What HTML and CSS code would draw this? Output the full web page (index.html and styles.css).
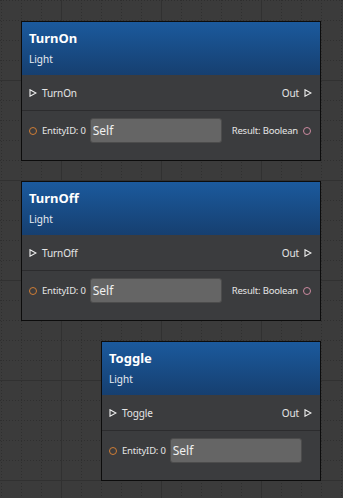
FILE: index.html
```html
<!DOCTYPE html>
<html lang="en">

<head>
    <meta charset="UTF-8">
    <meta name="viewport" content="width=device-width, initial-scale=1.0">
    <title>Script Canvas - Light</title>
    <link rel="stylesheet" href="styles.css">
</head>

<body>
    <div class="canvas">

        <!-- TurnOn -->
        <div class="node">
            <div class="node-header">
                <div class="node-title">TurnOn</div>
                <div class="node-category">Light</div>
            </div>
            <div class="exec-row">
                <span class="slot"><svg class="exec-pin" viewBox="0 0 8 8"><polygon points="1,0.8 7,4 1,7.2"/></svg>TurnOn</span>
                <span class="slot">Out<svg class="exec-pin" viewBox="0 0 8 8"><polygon points="1,0.8 7,4 1,7.2"/></svg></span>
            </div>
            <div class="data-row">
                <span class="slot"><i class="pin pin-entity"></i>EntityID: 0</span>
                <div class="value-box">Self</div>
                <span class="slot slot-out">Result: Boolean<i class="pin pin-bool"></i></span>
            </div>
        </div>

        <!-- TurnOff -->
        <div class="node">
            <div class="node-header">
                <div class="node-title">TurnOff</div>
                <div class="node-category">Light</div>
            </div>
            <div class="exec-row">
                <span class="slot"><svg class="exec-pin" viewBox="0 0 8 8"><polygon points="1,0.8 7,4 1,7.2"/></svg>TurnOff</span>
                <span class="slot">Out<svg class="exec-pin" viewBox="0 0 8 8"><polygon points="1,0.8 7,4 1,7.2"/></svg></span>
            </div>
            <div class="data-row">
                <span class="slot"><i class="pin pin-entity"></i>EntityID: 0</span>
                <div class="value-box">Self</div>
                <span class="slot slot-out">Result: Boolean<i class="pin pin-bool"></i></span>
            </div>
        </div>

        <!-- Toggle -->
        <div class="node node-small">
            <div class="node-header">
                <div class="node-title">Toggle</div>
                <div class="node-category">Light</div>
            </div>
            <div class="exec-row">
                <span class="slot"><svg class="exec-pin" viewBox="0 0 8 8"><polygon points="1,0.8 7,4 1,7.2"/></svg>Toggle</span>
                <span class="slot">Out<svg class="exec-pin" viewBox="0 0 8 8"><polygon points="1,0.8 7,4 1,7.2"/></svg></span>
            </div>
            <div class="data-row">
                <span class="slot"><i class="pin pin-entity"></i>EntityID: 0</span>
                <div class="value-box">Self</div>
            </div>
        </div>

    </div>
</body>

</html>
```

FILE: styles.css
```css
html,
body {
    margin: 0;
    height: 100%;
}

body {
    font-family: "Noto Sans", "Open Sans", sans-serif;
    color: #e6e6e6;
    background-color: #3b3b3b;
    /* major lines, then dotted minor lines */
    background-image:
        linear-gradient(to right, #313131 1px, transparent 1px),
        linear-gradient(to bottom, #313131 1px, transparent 1px),
        conic-gradient(from 270deg at 1px 1px, #2f2f2f 25%, transparent 0),
        conic-gradient(from 270deg at 1px 1px, #2f2f2f 25%, transparent 0);
    background-size: 100px 100%, 100% 100px, 20px 3px, 3px 20px;
    background-position: 61px 0, 0 80px, 1px 0, 0 0;
    overflow: hidden;
}

.canvas {
    display: flex;
    flex-direction: column;
    align-items: flex-start;
    gap: 20px;
    padding: 21px 0 0 21px;
}

.node {
    width: 298px;
    border: 1px solid #0c0c0c;
    background-color: #3b3c3e;
}

.node-small {
    width: 218px;
    margin-left: 80px;
}

.node-header {
    height: 53px;
    box-sizing: border-box;
    padding: 7px 7px 0;
    background: linear-gradient(to bottom, #1b5a9d, #163f70);
    color: #ffffff;
}

.node-title {
    font-size: 13px;
    font-weight: bold;
    line-height: 18px;
}

.node-category {
    font-size: 10px;
    line-height: 14px;
    margin-top: 5px;
    color: #e8ecf2;
}

.exec-row {
    height: 35px;
    display: flex;
    align-items: center;
    justify-content: space-between;
    padding: 0 8px 0 7px;
    border-bottom: 1px solid #2c2c2e;
}

.slot {
    display: flex;
    align-items: center;
    gap: 4px;
    font-size: 9.5px;
    letter-spacing: -0.1px;
    white-space: nowrap;
}

.exec-row .slot {
    font-size: 10px;
    gap: 5px;
}

.exec-pin {
    width: 8px;
    height: 8px;
    fill: none;
    stroke: #f0f0f0;
    stroke-width: 1.1;
}

.data-row {
    height: 49px;
    box-sizing: border-box;
    display: flex;
    align-items: center;
    padding: 0 9px 10px 7px;
}

.data-row .slot {
    gap: 5px;
    letter-spacing: -0.2px;
}

.pin {
    display: inline-block;
    width: 6px;
    height: 6px;
    border-radius: 50%;
    border: 1.3px solid;
}

.pin-entity {
    border-color: #cf7d35;
}

.pin-bool {
    border-color: #cc8aa0;
}

.value-box {
    width: 128px;
    height: 23px;
    margin-left: 4px;
    box-sizing: content-box;
    border: 1px solid #4c4c4c;
    border-radius: 3px;
    background-color: #656565;
    color: #f0f0f0;
    font-size: 12px;
    line-height: 23px;
    padding-left: 2px;
}

.slot-out {
    margin-left: auto;
}
```
